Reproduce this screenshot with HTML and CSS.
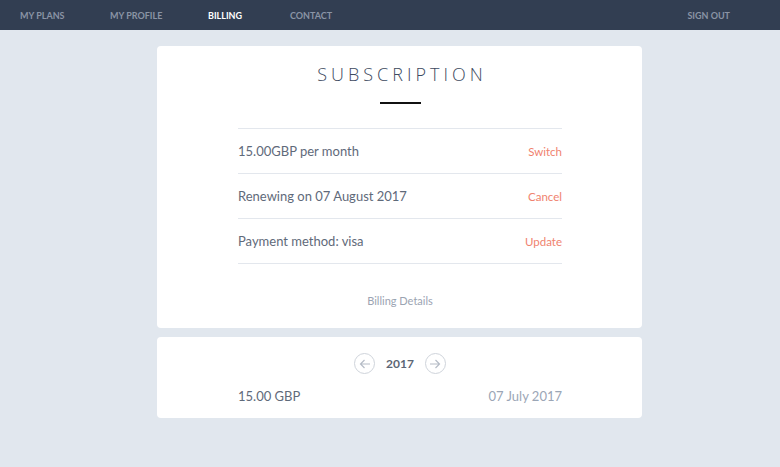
FILE: index.html
```html
<!DOCTYPE html>
<html>
<head>
<meta charset="UTF-8">
<title>Billing</title>
<link rel="stylesheet" href="styles.css">
</head>
<body>
<!-- top navigation -->
<div class="nav">
  <a href="#" class="nav-link plans">My Plans</a>
  <a href="#" class="nav-link profile">My Profile</a>
  <a href="#" class="nav-link billing active">Billing</a>
  <a href="#" class="nav-link">Contact</a>
  <a href="#" class="nav-link signout">Sign Out</a>
</div>

<div class="page">
  <!-- subscription card -->
  <div class="card sub">
    <h1 class="title">Subscription</h1>
    <div class="rule"></div>
    <div class="rows">
      <div class="row"><span>15.00GBP per month</span><a href="#">Switch</a></div>
      <div class="row"><span>Renewing on 07 August 2017</span><a href="#">Cancel</a></div>
      <div class="row"><span>Payment method: visa</span><a href="#">Update</a></div>
    </div>
    <div class="details">Billing Details</div>
  </div>

  <!-- invoices by year -->
  <div class="card history">
    <div class="year-nav">
      <span class="circle">
        <svg width="12" height="12" viewBox="0 0 12 12"><path d="M11 6H1.5M5.5 2L1.5 6l4 4" fill="none" stroke="#b5bcc6" stroke-width="1.2"/></svg>
      </span>
      <span class="year">2017</span>
      <span class="circle">
        <svg width="12" height="12" viewBox="0 0 12 12"><path d="M1 6h9.5M6.5 2l4 4-4 4" fill="none" stroke="#b5bcc6" stroke-width="1.2"/></svg>
      </span>
    </div>
    <div class="invoice"><span>15.00 GBP</span><span class="date">07 July 2017</span></div>
  </div>
</div>
</body>
</html>
```

FILE: styles.css
```css
body {
	margin: 0;
	background-color: #e1e7ee;
	font-family: Lato, "Liberation Sans", sans-serif;
	color: #5f6a7a;
}
a {
	text-decoration: none;
}
.nav {
	display: flex;
	align-items: center;
	height: 30px;
	background-color: #323e52;
	padding: 0 0 0 20px;
}
.nav-link {
	font-size: 9px;
	font-weight: bold;
	text-transform: uppercase;
	color: #8a94a5;
}
/* fixed slots so each label starts where it should */
.nav-link.plans {
	width: 90px;
}
.nav-link.profile {
	width: 98px;
}
.nav-link.billing {
	width: 82px;
}
.nav-link.active {
	color: #ffffff;
}
.nav-link.signout {
	margin-left: auto;
	margin-right: 50px;
}
.page {
	width: 485px;
	margin: 16px 0 0 157px;
}
.card {
	background-color: #ffffff;
	border-radius: 4px;
}
.sub {
	padding: 16px 80px 20px 81px;
	height: 246px;
}
.title {
	margin: 0;
	text-align: center;
	font-family: "Open Sans", sans-serif;
	font-weight: 300;
	font-size: 18px;
	letter-spacing: 4px;
	text-transform: uppercase;
	color: #3d4a60;
	line-height: 24px;
	padding-left: 4px;
}
.rule {
	width: 41px;
	height: 2px;
	background-color: #111;
	margin: 16px auto 24px;
}
.rows {
	border-top: 1px solid #e3e7ed;
}
.row {
	display: flex;
	justify-content: space-between;
	align-items: center;
	height: 44px;
	border-bottom: 1px solid #e3e7ed;
	font-size: 13px;
}
.row a {
	color: #f0826e;
	font-size: 11.5px;
}
.details {
	text-align: center;
	font-size: 11px;
	color: #9ba4b2;
	margin-top: 30px;
}
.history {
	margin-top: 9px;
	padding: 16px 80px 12px 81px;
	height: 53px;
}
.year-nav {
	display: flex;
	justify-content: center;
	align-items: center;
	gap: 9px;
}
.circle {
	display: flex;
	align-items: center;
	justify-content: center;
	width: 19px;
	height: 19px;
	border: 1px solid #cfd4db;
	border-radius: 50%;
}
.year {
	font-size: 12px;
	font-weight: bold;
	color: #5c6675;
	padding: 0 2px;
}
.invoice {
	display: flex;
	justify-content: space-between;
	margin-top: 14px;
	font-size: 13px;
}
.invoice .date {
	color: #9ba6b6;
}
```
